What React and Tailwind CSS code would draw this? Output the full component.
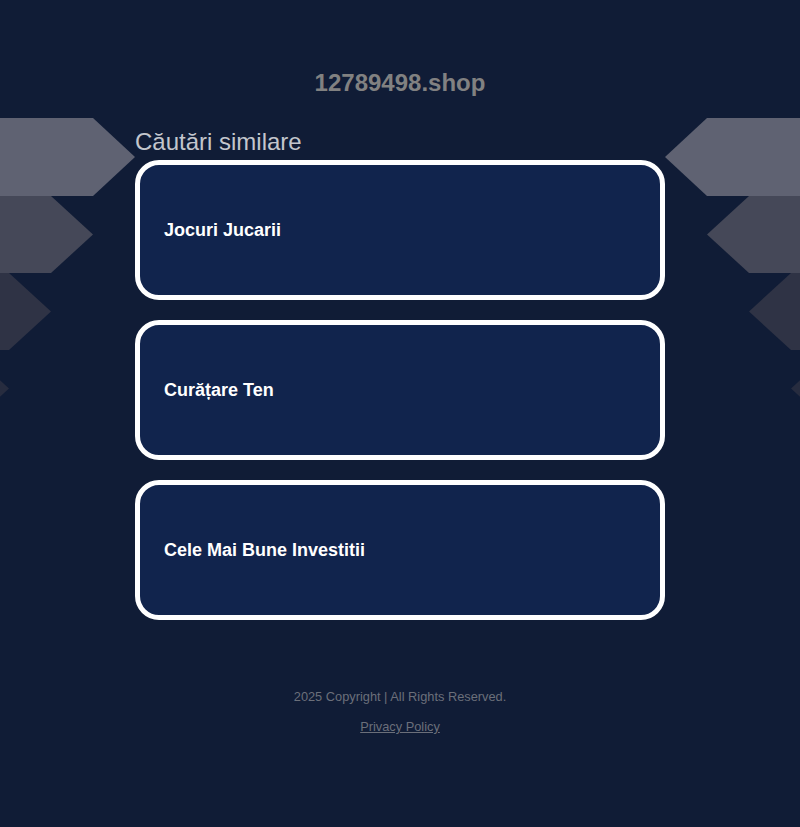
import React from "react";

const cards = ["Jocuri Jucarii", "Curățare Ten", "Cele Mai Bune Investitii"];

function Deco({ mirror }) {
  return (
    <svg
      width="140"
      height="320"
      viewBox="0 0 140 320"
      className={mirror ? "absolute right-0 top-[118px] -scale-x-100" : "absolute left-0 top-[118px]"}
    >
      <polygon points="0,0 93,0 135,39 93,78 0,78" fill="#5f6272" />
      <polygon points="0,78 51,78 93,116.5 51,155 0,155" fill="#454858" />
      <polygon points="0,155 9,155 51,193.5 9,232 0,232" fill="#2f3345" />
      <polygon points="-33,232 9,270.5 -33,309" fill="#272c3f" />
    </svg>
  );
}

export default function App() {
  return (
    <div
      className="relative min-h-[827px] w-full overflow-hidden bg-[#101c36]"
      style={{ fontFamily: '"Liberation Sans", Arial, sans-serif' }}
    >
      <Deco />
      <Deco mirror />
      <div className="relative mx-auto w-[530px]">
        <h1 className="pt-[69px] text-center text-[24px] font-bold leading-[28px] text-[#818181]">
          12789498.shop
        </h1>
        <h2 className="mt-[31px] text-[24px] leading-[28px] text-[#c3c6cd]">Căutări similare</h2>
        <div className="mt-[4px] flex flex-col gap-[20px]">
          {cards.map((c) => (
            <div
              key={c}
              className="flex h-[140px] items-center rounded-[24px] border-[5px] border-white bg-[#11244d] pl-[24px]"
            >
              <span className="text-[18px] font-bold text-white">{c}</span>
            </div>
          ))}
        </div>
        <p className="mt-[69px] text-center text-[12.8px] leading-[15px] text-[#6b6f7a]">
          2025 Copyright | All Rights Reserved.
        </p>
        <p className="mt-[15px] text-center text-[12.8px] leading-[15px]">
          <a href="#" className="text-[#6b6f7a] underline">
            Privacy Policy
          </a>
        </p>
      </div>
    </div>
  );
}
